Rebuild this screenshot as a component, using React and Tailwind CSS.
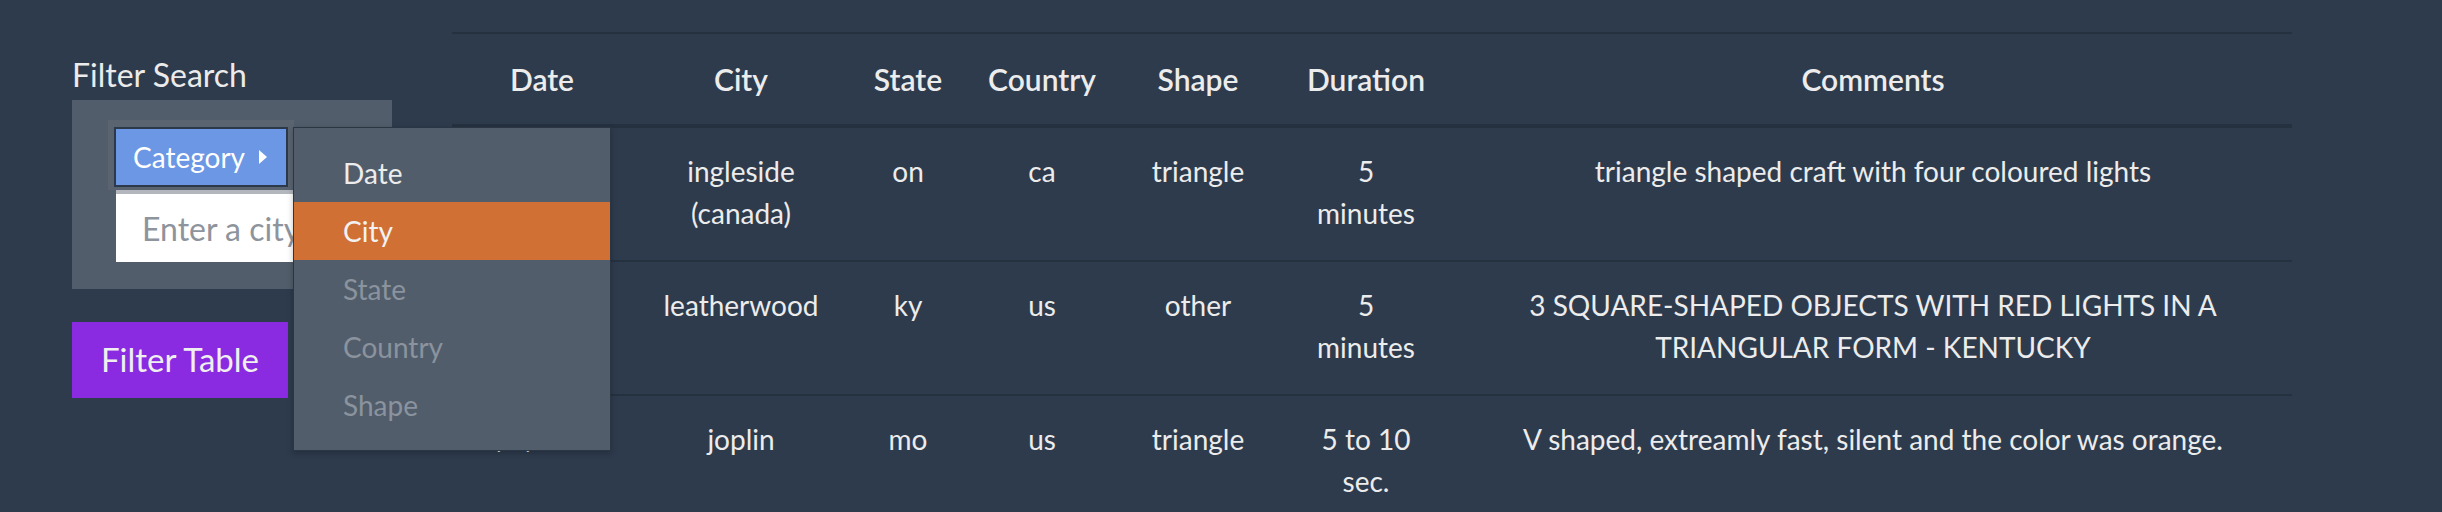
import React from 'react'

const columns = [
    { label: 'Date', width: 'w-[180px]' },
    { label: 'City', width: 'w-[218px]' },
    { label: 'State', width: 'w-[116px]' },
    { label: 'Country', width: 'w-[152px]' },
    { label: 'Shape', width: 'w-[160px]' },
    { label: 'Duration', width: 'w-[176px]' },
    { label: 'Comments', width: 'w-[838px]' },
]

const rows = [
    {
        date: ['1/1/2010'],
        city: ['ingleside', '(canada)'],
        state: ['on'],
        country: ['ca'],
        shape: ['triangle'],
        duration: ['5', 'minutes'],
        comments: ['triangle shaped craft with four coloured lights'],
    },
    {
        date: ['1/1/2010'],
        city: ['leatherwood'],
        state: ['ky'],
        country: ['us'],
        shape: ['other'],
        duration: ['5', 'minutes'],
        comments: ['3 SQUARE-SHAPED OBJECTS WITH RED LIGHTS IN A', 'TRIANGULAR FORM - KENTUCKY'],
    },
    {
        date: ['1/1/2010'],
        city: ['joplin'],
        state: ['mo'],
        country: ['us'],
        shape: ['triangle'],
        duration: ['5 to 10', 'sec.'],
        comments: ['V shaped, extreamly fast, silent and the color was orange.'],
    },
]

const fields = ['date', 'city', 'state', 'country', 'shape', 'duration', 'comments']

const Cell = ({ lines, width }) => (
    <div className={`${width} shrink-0 text-center`}>
        {lines.map((line, i) => (
            <div key={i} className="whitespace-nowrap">
                {line}
            </div>
        ))}
    </div>
)

const FilterPanel = () => {
    const options = [
        { label: 'Date', state: 'normal' },
        { label: 'City', state: 'active' },
        { label: 'State', state: 'disabled' },
        { label: 'Country', state: 'disabled' },
        { label: 'Shape', state: 'disabled' },
    ]

    return (
        <div className="w-[320px] shrink-0 pt-[56px]">
            <h2 className="text-[32px] leading-[37px] text-[#ebebeb]">Filter Search</h2>

            <div className="mt-[7px] h-[189px] bg-[#525d6b] pl-[36px] pt-[20px]">
                <div className="w-[186px] h-[70px] bg-[#5a6471] p-[6px] pt-[7px]">
                    <div className="relative">
                        <button className="flex items-center w-[174px] h-[60px] bg-[#6c97e4] border-2 border-[#2b394a] pl-[17px] text-[28px] text-white">
                            Category
                            <svg width="8" height="14" viewBox="0 0 8 14" className="ml-[14px]">
                                <path d="M0 0 L8 7 L0 14 Z" fill="#ffffff" />
                            </svg>
                        </button>

                        {/* open category menu */}
                        <div className="absolute left-[179px] top-0 z-10 w-[318px] h-[324px] bg-[#525d6b] border border-[#2b3644] py-[16px] shadow-[0_2px_6px_rgba(0,0,0,0.25)]">
                            {options.map((opt) => (
                                <div
                                    key={opt.label}
                                    className={`h-[58px] flex items-center pl-[49px] text-[28px] ${
                                        opt.state === 'active'
                                            ? 'bg-[#d07034] text-[#f2f2f2]'
                                            : opt.state === 'disabled'
                                              ? 'text-[#8a939e]'
                                              : 'text-[#ececec]'
                                    }`}
                                >
                                    {opt.label}
                                </div>
                            ))}
                        </div>
                    </div>
                </div>
                <input
                    className="block ml-[8px] w-[300px] h-[72px] bg-white border-t-4 border-[#b3b7bd] pl-[26px] text-[32px] text-[#333] placeholder:text-[#8e949c] outline-none"
                    placeholder="Enter a city"
                />
            </div>

            <button className="mt-[33px] w-[216px] h-[76px] bg-[#8a2be2] text-[33px] text-[#efefef]">
                Filter Table
            </button>
        </div>
    )
}

const App = () => {
    return (
        <div className="min-h-[512px] w-[2442px] bg-[#2e3b4d] flex items-start pl-[72px] font-['Lato','Noto_Sans',sans-serif]">
            <FilterPanel />

            <div className="ml-[60px] w-[1840px] mt-[32px] text-[#ececec]">
                <div className="flex items-center h-[96px] border-t-2 border-b-4 border-[#263140] text-[30px] font-semibold">
                    {columns.map((col) => (
                        <div key={col.label} className={`${col.width} shrink-0 text-center whitespace-nowrap`}>
                            {col.label}
                        </div>
                    ))}
                </div>

                {rows.map((row, i) => (
                    <div
                        key={i}
                        className="flex items-start pt-[22px] pb-[26px] border-b-2 border-[#263140] text-[28px] leading-[42px]"
                    >
                        {fields.map((f, j) => (
                            <Cell key={f} lines={row[f]} width={columns[j].width} />
                        ))}
                    </div>
                ))}
            </div>
        </div>
    )
}

export default App
